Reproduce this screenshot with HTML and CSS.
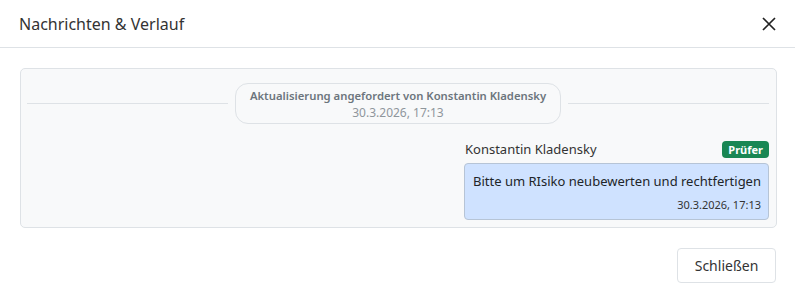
FILE: index.html
```html
<html>

<head>
    <title>Nachrichten &amp; Verlauf</title>
    <link rel="stylesheet" href="styles.css">
</head>

<body>
    <div class="modal">
        <div class="modal-header">
            <h5 class="modal-title">Nachrichten &amp; Verlauf</h5>
            <button class="close-button" aria-label="Schließen">
                <svg width="14" height="14" viewBox="0 0 14 14">
                    <path d="M1 1 L13 13 M13 1 L1 13" stroke="#222" stroke-width="1.7" fill="none" />
                </svg>
            </button>
        </div>

        <div class="modal-body">
            <div class="history">
                <div class="event-row">
                    <div class="event-line"></div>
                    <div class="event-pill">
                        <div class="event-title">Aktualisierung angefordert von Konstantin Kladensky</div>
                        <div class="event-date">30.3.2026, 17:13</div>
                    </div>
                    <div class="event-line"></div>
                </div>

                <div class="message-group">
                    <div class="message-meta">
                        <span class="message-author">Konstantin Kladensky</span>
                        <span class="role-badge">Prüfer</span>
                    </div>
                    <div class="message-bubble">
                        <div class="message-text">Bitte um RIsiko neubewerten und rechtfertigen</div>
                        <div class="message-date">30.3.2026, 17:13</div>
                    </div>
                </div>
            </div>
        </div>

        <div class="modal-footer">
            <button class="btn-close-modal">Schließen</button>
        </div>
    </div>
</body>

</html>
```

FILE: styles.css
```css
html,
body {
    margin: 0;
    background-color: #ffffff;
}

body {
    font-family: 'Noto Sans', 'Open Sans', sans-serif;
    color: #212529;
}

.modal {
    width: 795px;
}

.modal-header {
    display: flex;
    align-items: center;
    justify-content: space-between;
    height: 48px;
    padding: 0 18px 0 19px;
    border-bottom: 1px solid #dee2e6;
    box-sizing: border-box;
}

.modal-title {
    margin: 0;
    font-size: 16px;
    font-weight: 400;
    color: #333333;
}

.close-button {
    border: none;
    background: none;
    padding: 0;
    width: 16px;
    height: 16px;
    display: flex;
    align-items: center;
    justify-content: center;
    cursor: pointer;
}

.modal-body {
    padding: 20px 18px 0 20px;
}

.history {
    background-color: #f8f9fa;
    border: 1px solid #dee2e6;
    border-radius: 5px;
    padding: 14px 7px 7px 6px;
}

.event-row {
    display: flex;
    align-items: center;
    gap: 7px;
}

.event-line {
    flex-grow: 1;
    height: 1px;
    background-color: #dee2e6;
}

.event-pill {
    border: 1px solid #dee2e6;
    border-radius: 13px;
    padding: 3px 14px 2px;
    text-align: center;
    line-height: 17px;
}

.event-title {
    font-size: 11.3px;
    font-weight: 600;
    color: #6c757d;
}

.event-date {
    font-size: 12px;
    color: #8f969c;
}

.message-group {
    width: 305px;
    margin: 16px 0 0 auto;
}

.message-meta {
    display: flex;
    align-items: center;
    justify-content: space-between;
    padding-left: 1px;
    margin-bottom: 5px;
}

.message-author {
    font-size: 13px;
    color: #333333;
}

.role-badge {
    background-color: #198754;
    color: #ffffff;
    font-size: 11px;
    font-weight: 700;
    border-radius: 4px;
    padding: 1px 6px;
    line-height: 15px;
}

.message-bubble {
    background-color: #cfe2ff;
    border: 1px solid #b6c4d6;
    border-radius: 4px;
    padding: 8px 7px 6px 8px;
}

.message-text {
    font-size: 13px;
    line-height: 19px;
    color: #212529;
}

.message-date {
    font-size: 11px;
    line-height: 16px;
    text-align: right;
    color: #333333;
    margin-top: 6px;
}

.modal-footer {
    display: flex;
    justify-content: flex-end;
    padding: 20px 19px 18px 0;
}

.btn-close-modal {
    font-family: 'Noto Sans', 'Open Sans', sans-serif;
    font-size: 14px;
    color: #333333;
    background-color: #ffffff;
    border: 1px solid #dee2e6;
    border-radius: 4px;
    width: 99px;
    height: 35px;
    cursor: pointer;
}
```
